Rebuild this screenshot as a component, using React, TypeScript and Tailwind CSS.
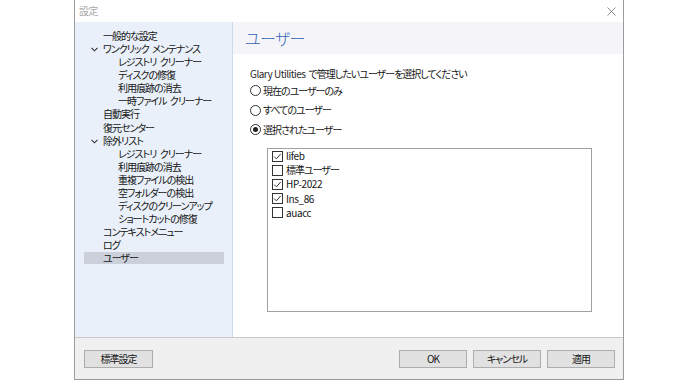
import React from "react";

const font = "font-['Noto_Sans_CJK_JP','Noto_Sans',sans-serif] [font-feature-settings:'palt']";
const txt = "text-[10px] tracking-[-1px] leading-[12px] text-[#151515] [word-spacing:2px]";

type Item = { label: string; level: 0 | 1; chevron?: boolean; selected?: boolean };

const items: Item[] = [
  { label: "一般的な設定", level: 0 },
  { label: "ワンクリック メンテナンス", level: 0, chevron: true },
  { label: "レジストリ クリーナー", level: 1 },
  { label: "ディスクの修復", level: 1 },
  { label: "利用痕跡の消去", level: 1 },
  { label: "一時ファイル クリーナー", level: 1 },
  { label: "自動実行", level: 0 },
  { label: "復元センター", level: 0 },
  { label: "除外リスト", level: 0, chevron: true },
  { label: "レジストリ クリーナー", level: 1 },
  { label: "利用痕跡の消去", level: 1 },
  { label: "重複ファイルの検出", level: 1 },
  { label: "空フォルダーの検出", level: 1 },
  { label: "ディスクのクリーンアップ", level: 1 },
  { label: "ショートカットの修復", level: 1 },
  { label: "コンテキストメニュー", level: 0 },
  { label: "ログ", level: 0 },
  { label: "ユーザー", level: 0, selected: true },
];

const users = [
  { name: "lifeb", checked: true, latin: true },
  { name: "標準ユーザー", checked: false, latin: false },
  { name: "HP-2022", checked: true, latin: true },
  { name: "Ins_86", checked: true, latin: true },
  { name: "auacc", checked: false, latin: true },
];

function Chevron() {
  return (
    <svg width="7" height="5" viewBox="0 0 7 5" className="block">
      <path d="M0.5 0.8 L3.5 3.8 L6.5 0.8" fill="none" stroke="#333" strokeWidth="1.1" />
    </svg>
  );
}

function Radio({ checked }: { checked?: boolean }) {
  return (
    <span className="w-[11px] h-[11px] rounded-full border border-[#333] bg-white flex items-center justify-center shrink-0">
      {checked && <span className="w-[5px] h-[5px] rounded-full bg-[#222]" />}
    </span>
  );
}

function Check({ checked }: { checked?: boolean }) {
  return (
    <span className="w-[11px] h-[11px] border border-[#333] bg-white flex items-center justify-center shrink-0">
      {checked && (
        <svg width="9" height="9" viewBox="0 0 9 9" className="block">
          <path d="M1.2 4.6 L3.4 6.8 L7.8 1.8" fill="none" stroke="#333" strokeWidth="1" />
        </svg>
      )}
    </span>
  );
}

function Button({ label, w }: { label: string; w: string }) {
  return (
    <div className={`${w} h-[18px] bg-[#e1e1e1] border border-[#adadad] flex items-center justify-center ${txt}`}>
      {label}
    </div>
  );
}

export default function App() {
  return (
    <div className={`w-[700px] h-[383px] bg-white overflow-hidden ${font}`}>
      <div className="ml-[74px] w-[550px] h-[380px] border-x border-b border-[#9c9c9c] flex flex-col bg-white">
        {/* title bar */}
        <div className="h-[22px] flex items-center justify-between pl-[4px] pr-[7px]">
          <span className="text-[10px] tracking-[-0.5px] leading-[12px] text-[#a8a8a8]">設定</span>
          <svg width="9" height="9" viewBox="0 0 9 9" className="block">
            <path d="M0.5 0.5 L8.5 8.5 M8.5 0.5 L0.5 8.5" stroke="#8a8a8a" strokeWidth="1" />
          </svg>
        </div>

        {/* body */}
        <div className="h-[315px] flex">
          {/* sidebar */}
          <div className="w-[158px] h-full bg-[#e9f0f9] border-r border-[#c9d9ee] pt-[8px] pl-[9px] pr-[8px] flex flex-col gap-[1.08px]">
            {items.map((it, i) => (
              <div
                key={i}
                className={`h-[12px] flex items-center ${txt} ${it.selected ? "bg-[#cbd0da]" : ""} ${
                  it.level === 0 ? "pl-[19px]" : "pl-[34px]"
                } relative`}
              >
                {it.chevron && (
                  <span className="absolute left-[7px] top-[4px]">
                    <Chevron />
                  </span>
                )}
                <span className="whitespace-nowrap">{it.label}</span>
              </div>
            ))}
          </div>

          {/* main */}
          <div className="flex-1 flex flex-col">
            <div className="h-[32px] bg-[#f5f5f9] flex items-center pl-[12px]">
              <span className="text-[16px] leading-[20px] font-light text-[#3264b4] tracking-[-0.6px]">ユーザー</span>
            </div>
            <div className="flex flex-col pl-[17px] pt-[13px]">
              <div className={`h-[14px] flex items-center ${txt}`}>
                <span className="text-[#2a2a2a] tracking-[-0.5px] [word-spacing:0px]">Glary Utilities</span>
                <span className="ml-[3px]">で管理したいユーザーを選択してください</span>
              </div>
              <div className="flex flex-col">
                {[
                  { label: "現在のユーザーのみ", checked: false },
                  { label: "すべてのユーザー", checked: false },
                  { label: "選択されたユーザー", checked: true },
                ].map((r, i) => (
                  <div key={i} className={`h-[19.5px] flex items-center gap-[2px] ${txt}`}>
                    <Radio checked={r.checked} />
                    <span>{r.label}</span>
                  </div>
                ))}
              </div>
              <div className="mt-[8.5px] ml-[17px] w-[325px] h-[164px] border border-[#a0a0a0] bg-white pl-[4px] flex flex-col">
                {users.map((u, i) => (
                  <div key={i} className={`h-[14.2px] flex items-center gap-[3px] ${txt}`}>
                    <Check checked={u.checked} />
                    <span className={u.latin ? "tracking-[-0.4px]" : ""}>{u.name}</span>
                  </div>
                ))}
              </div>
            </div>
          </div>
        </div>

        {/* footer */}
        <div className="h-[42px] bg-[#f0f0f0] border-t border-[#c8c8c8] flex items-center justify-between pl-[9px] pr-[8px]">
          <Button label="標準設定" w="w-[69px]" />
          <div className="flex gap-[6px]">
            <Button label="OK" w="w-[68px]" />
            <Button label="キャンセル" w="w-[68px]" />
            <Button label="適用" w="w-[68px]" />
          </div>
        </div>
      </div>
    </div>
  );
}
